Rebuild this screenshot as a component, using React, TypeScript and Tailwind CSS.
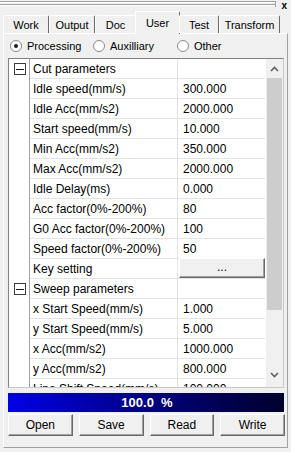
import React from "react";

type Row =
  | { kind: "cat"; label: string }
  | { kind: "val"; label: string; value: string }
  | { kind: "btn"; label: string };

const rows: Row[] = [
  { kind: "cat", label: "Cut parameters" },
  { kind: "val", label: "Idle speed(mm/s)", value: "300.000" },
  { kind: "val", label: "Idle Acc(mm/s2)", value: "2000.000" },
  { kind: "val", label: "Start speed(mm/s)", value: "10.000" },
  { kind: "val", label: "Min Acc(mm/s2)", value: "350.000" },
  { kind: "val", label: "Max Acc(mm/s2)", value: "2000.000" },
  { kind: "val", label: "Idle Delay(ms)", value: "0.000" },
  { kind: "val", label: "Acc factor(0%-200%)", value: "80" },
  { kind: "val", label: "G0 Acc factor(0%-200%)", value: "100" },
  { kind: "val", label: "Speed factor(0%-200%)", value: "50" },
  { kind: "btn", label: "Key setting" },
  { kind: "cat", label: "Sweep parameters" },
  { kind: "val", label: "x Start Speed(mm/s)", value: "1.000" },
  { kind: "val", label: "y Start Speed(mm/s)", value: "5.000" },
  { kind: "val", label: "x Acc(mm/s2)", value: "1000.000" },
  { kind: "val", label: "y Acc(mm/s2)", value: "800.000" },
  { kind: "val", label: "Line Shift Speed(mm/s)", value: "100.000" },
];

const tabs = [
  { name: "Work", w: "w-[46px]" },
  { name: "Output", w: "w-[46px]" },
  { name: "Doc", w: "w-[41px]" },
  { name: "User", w: "w-[45px]", sel: true },
  { name: "Test", w: "w-[40px]" },
  { name: "Transform", w: "w-[61px]" },
];

function Radio({ label, checked }: { label: string; checked?: boolean }) {
  return (
    <div className="flex items-center gap-[5px]">
      <div className="w-[12px] h-[12px] rounded-full border border-[#8a8a8a] bg-white flex items-center justify-center">
        {checked && <div className="w-[4px] h-[4px] rounded-full bg-[#1a1a1a]" />}
      </div>
      <span className="text-[11px] leading-[13px] text-black">{label}</span>
    </div>
  );
}

function Chevron({ up }: { up?: boolean }) {
  return (
    <svg width="9" height="6" viewBox="0 0 9 6">
      <path
        d={up ? "M1 5 L4.5 1.5 L8 5" : "M1 1 L4.5 4.5 L8 1"}
        fill="none"
        stroke="#606060"
        strokeWidth="1.6"
      />
    </svg>
  );
}

function ClassicButton({ label, className }: { label: string; className?: string }) {
  return (
    <div
      className={
        "flex items-center justify-center bg-[#f0f0f0] border border-t-white border-l-white border-r-[#696969] border-b-[#696969] shadow-[inset_-1px_-1px_0_#a0a0a0] text-[12px] text-black " +
        (className ?? "")
      }
    >
      {label}
    </div>
  );
}

export default function App() {
  return (
    <div
      className="w-[291px] h-[452px] bg-[#f0f0f0] overflow-hidden flex flex-col text-black"
      style={{ fontFamily: '"Liberation Sans", Arial, sans-serif' }}
    >
      {/* gripper */}
      <div className="h-[11px] flex items-start pr-[4px]">
        <div className="flex-1 mt-[1px] mr-[5px] border-r border-[#a0a0a0] h-[6px] flex flex-col">
          <div className="h-[1px] bg-[#a0a0a0]" />
          <div className="h-[1px] bg-white" />
          <div className="h-[1px]" />
          <div className="h-[1px] bg-[#a0a0a0]" />
          <div className="h-[1px] bg-white" />
        </div>
        <span className="text-[10px] font-bold leading-[10px] mt-[1px]">x</span>
      </div>

      {/* tabs */}
      <div className="h-[22px] flex items-end pl-[3px] relative z-10">
        {tabs.map((t) =>
          t.sel ? (
            <div
              key={t.name}
              className={`${t.w} h-[23px] -mb-[1px] -mx-[1px] bg-[#f0f0f0] border-t border-l border-white border-r border-r-[#696969] rounded-t-[2px] flex justify-center pt-[3px] text-[11px]`}
            >
              {t.name}
            </div>
          ) : (
            <div
              key={t.name}
              className={`${t.w} h-[18px] bg-[#f0f0f0] border-t border-l border-white border-r border-r-[#696969] rounded-t-[2px] flex justify-center items-center pt-[1px] text-[11px]`}
            >
              {t.name}
            </div>
          )
        )}
      </div>

      {/* panel */}
      <div className="ml-[3px] w-[285px] h-[415px] border-t border-l border-white border-r border-r-[#a0a0a0] border-b border-b-[#a0a0a0] flex flex-col pl-[4px]">
        <div className="h-[24px] flex items-center pl-[2px]">
          <div className="w-[83px]">
            <Radio label="Processing" checked />
          </div>
          <div className="w-[84px]">
            <Radio label="Auxilliary" />
          </div>
          <Radio label="Other" />
        </div>

        {/* grid */}
        <div className="w-[276px] h-[330px] border border-[#828282] border-r-[#c8c8c8] border-b-[#c8c8c8] bg-white flex">
          <div className="w-[257px] h-[328px] overflow-hidden flex flex-col">
            {rows.map((r, i) => (
              <div key={i} className="h-[20px] shrink-0 flex text-[12px]">
                <div className="w-[21px] h-full border-r border-[#a0a0a0] flex items-center justify-center pl-[1px]">
                  {r.kind === "cat" && (
                    <div className="w-[12px] h-[12px] border border-[#3c3c3c] flex items-center justify-center">
                      <div className="w-[8px] h-[1px] bg-[#1a1a1a]" />
                    </div>
                  )}
                </div>
                <div className="w-[148px] h-full border-r border-b border-[#e3e3e3] flex items-center pl-[3px] whitespace-nowrap overflow-hidden">
                  {r.label}
                </div>
                <div className="w-[87px] h-full border-b border-[#e3e3e3] flex items-center">
                  {r.kind === "val" && <span className="pl-[5px]">{r.value}</span>}
                  {r.kind === "btn" && (
                    <ClassicButton label="..." className="w-[86px] h-[20px] ml-[1px] -mt-[1px] text-[11px] pb-[3px]" />
                  )}
                </div>
              </div>
            ))}
          </div>
          {/* scrollbar */}
          <div className="w-[17px] h-[328px] bg-[#f0f0f0] flex flex-col items-center">
            <div className="h-[19px] w-full flex items-center justify-center">
              <Chevron up />
            </div>
            <div className="w-[15px] h-[232px] bg-[#cdcdcd]" />
            <div className="flex-1" />
            <div className="h-[17px] w-full flex items-center justify-center mb-[4px]">
              <Chevron />
            </div>
          </div>
        </div>

        {/* progress */}
        <div className="mt-[5px] w-[276px] h-[19px] bg-gradient-to-r from-[#0000e6] to-[#00002e] flex items-center justify-center text-white font-bold text-[13px] pl-[2px]">
          100.0&nbsp;&nbsp;%
        </div>

        {/* buttons */}
        <div className="mt-[2px] w-[277px] h-[22px] flex gap-[6px]">
          <ClassicButton label="Open" className="flex-1" />
          <ClassicButton label="Save" className="flex-1" />
          <ClassicButton label="Read" className="flex-1" />
          <ClassicButton label="Write" className="flex-1" />
        </div>
      </div>
    </div>
  );
}
